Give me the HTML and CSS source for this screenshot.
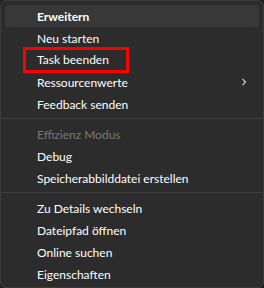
FILE: index.html
```html
<!DOCTYPE html>
<html lang="de">
<head>
    <meta charset="UTF-8">
    <title>Kontextmenü</title>
    <link rel="stylesheet" href="styles.css">
</head>
<body>
    <div class="menu">
        <div class="item hover bold">Erweitern</div>
        <div class="item">Neu starten</div>
        <div class="item"><span class="marked">Task beenden</span></div>
        <div class="item">Ressourcenwerte
            <svg class="chevron" width="6" height="8" viewBox="0 0 6 8">
                <path d="M1.5 0.8 L4.5 4 L1.5 7.2" fill="none" stroke="#d0d0d0" stroke-width="1.2"/>
            </svg>
        </div>
        <div class="item">Feedback senden</div>
        <div class="sep"></div>
        <div class="item disabled">Effizienz Modus</div>
        <div class="item">Debug</div>
        <div class="item">Speicherabbilddatei erstellen</div>
        <div class="sep"></div>
        <div class="item">Zu Details wechseln</div>
        <div class="item">Dateipfad öffnen</div>
        <div class="item">Online suchen</div>
        <div class="item">Eigenschaften</div>
    </div>
</body>
</html>
```

FILE: styles.css
```css
body {
    margin: 0;
    background-color: #202020;
    font-family: 'Lato', 'Open Sans', sans-serif;
}

.menu {
    width: 264px;
    height: 288px;
    box-sizing: border-box;
    background-color: #2c2c2c;
    border: 1px solid #3c3c3c;
    border-radius: 6px;
    padding: 4px;
}

.item {
    height: 22px;
    padding-left: 32px;
    padding-right: 12px;
    font-size: 12px;
    color: #ffffff;
    border-radius: 4px;
    display: flex;
    align-items: center;
    justify-content: space-between;
}

.hover {
    background-color: #383838;
}

.bold {
    font-weight: 700;
}

.disabled {
    color: #7a7a7a;
}

.marked {
    box-sizing: border-box;
    height: 26px;
    line-height: 20px;
    border: 3px solid #ff0000;
    margin-left: -14px;
    padding: 0 17px 0 11px;
    flex-shrink: 0;
}

.chevron {
    display: block;
}

.sep {
    height: 1px;
    background-color: #3e3e3e;
    margin: 3px -4px 4px;
}
```
